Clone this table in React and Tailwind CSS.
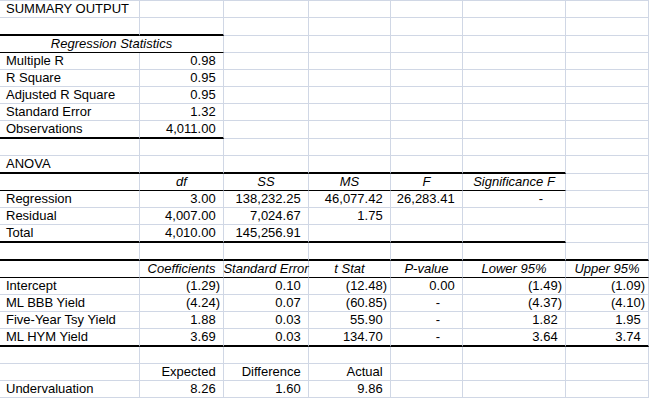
import React from "react";

const COLW = ["w-[140px]", "w-[84px]", "w-[85px]", "w-[82px]", "w-[72px]", "w-[103px]", "w-[83px]"];

function num(v) {
  if (v === "-") return (<>-<span className="invisible">00)</span></>);
  if (v.startsWith("(")) return v;
  return (<>{v}<span className="invisible">)</span></>);
}

function Cell({ w, hClass, bClass, c }) {
  let content = null;
  let align = "justify-start pl-[6px]";
  let italic = "";
  if (c) {
    if (typeof c === "string") {
      content = c;
    } else {
      if (c.a === "c") { align = "justify-center"; content = c.t; }
      else if (c.a === "n") { align = "justify-end pr-[3px]"; content = num(c.t); }
      else content = c.t;
      if (c.i) italic = "italic";
    }
  }
  return (
    <div className={`flex items-end shrink-0 box-border border-r border-r-[#d0d7e5] ${w} ${hClass} ${bClass} ${align}`}>
      {content !== null && (
        <div className={`h-[16px] leading-[16px] whitespace-nowrap ${italic}`}>{content}</div>
      )}
    </div>
  );
}

function Row({ h, bt, span, cells = [], merge }) {
  const hClass = h === 18 ? "h-[18px]" : "h-[17px]";
  const bFor = (i) =>
    i < span
      ? bt === "thick"
        ? "border-b-2 border-b-black"
        : "border-b border-b-black"
      : "border-b border-b-[#d0d7e5]";
  const out = [];
  if (merge) {
    out.push(<Cell key="m" w="w-[224px]" hClass={hClass} bClass={bFor(0)} c={merge} />);
    for (let i = 2; i < 7; i++) out.push(<Cell key={i} w={COLW[i]} hClass={hClass} bClass={bFor(i)} c={null} />);
  } else {
    for (let i = 0; i < 7; i++) out.push(<Cell key={i} w={COLW[i]} hClass={hClass} bClass={bFor(i)} c={cells[i]} />);
  }
  return <div className="flex">{out}</div>;
}

const n = (t) => ({ t, a: "n" });
const hd = (t) => ({ t, a: "c", i: true });

const rows = [
  { h: 17, cells: ["SUMMARY OUTPUT"] },
  { h: 18, bt: "thick", span: 2 },
  { h: 17, bt: "thin", span: 2, merge: { t: "Regression Statistics", a: "c", i: true } },
  { h: 17, cells: ["Multiple R", n("0.98")] },
  { h: 17, cells: ["R Square", n("0.95")] },
  { h: 17, cells: ["Adjusted R Square", n("0.95")] },
  { h: 17, cells: ["Standard Error", n("1.32")] },
  { h: 18, bt: "thick", span: 2, cells: ["Observations", n("4,011.00")] },
  { h: 17 },
  { h: 18, bt: "thick", span: 6, cells: ["ANOVA"] },
  { h: 17, bt: "thin", span: 6, cells: [null, hd("df"), hd("SS"), hd("MS"), hd("F"), hd("Significance F")] },
  { h: 17, cells: ["Regression", n("3.00"), n("138,232.25"), n("46,077.42"), n("26,283.41"), n("-")] },
  { h: 17, cells: ["Residual", n("4,007.00"), n("7,024.67"), n("1.75")] },
  { h: 18, bt: "thick", span: 6, cells: ["Total", n("4,010.00"), n("145,256.91")] },
  { h: 18, bt: "thick", span: 7 },
  { h: 17, bt: "thin", span: 7, cells: [null, hd("Coefficients"), hd("Standard Error"), hd("t Stat"), hd("P-value"), hd("Lower 95%"), hd("Upper 95%")] },
  { h: 17, cells: ["Intercept", n("(1.29)"), n("0.10"), n("(12.48)"), n("0.00"), n("(1.49)"), n("(1.09)")] },
  { h: 17, cells: ["ML BBB Yield", n("(4.24)"), n("0.07"), n("(60.85)"), n("-"), n("(4.37)"), n("(4.10)")] },
  { h: 17, cells: ["Five-Year Tsy Yield", n("1.88"), n("0.03"), n("55.90"), n("-"), n("1.82"), n("1.95")] },
  { h: 18, bt: "thick", span: 7, cells: ["ML HYM Yield", n("3.69"), n("0.03"), n("134.70"), n("-"), n("3.64"), n("3.74")] },
  { h: 17 },
  { h: 17, cells: [null, n("Expected"), n("Difference"), n("Actual")] },
  { h: 17, cells: ["Undervaluation", n("8.26"), n("1.60"), n("9.86")] },
];

export default function App() {
  return (
    <div className="w-[649px] h-[398px] bg-white text-black text-[13px] overflow-hidden font-['Liberation_Sans',Arial,sans-serif]">
      <div className="h-px w-[649px] bg-[#d0d7e5]" />
      {rows.map((r, i) => (
        <Row key={i} h={r.h} bt={r.bt} span={r.span || 0} cells={r.cells} merge={r.merge} />
      ))}
    </div>
  );
}
